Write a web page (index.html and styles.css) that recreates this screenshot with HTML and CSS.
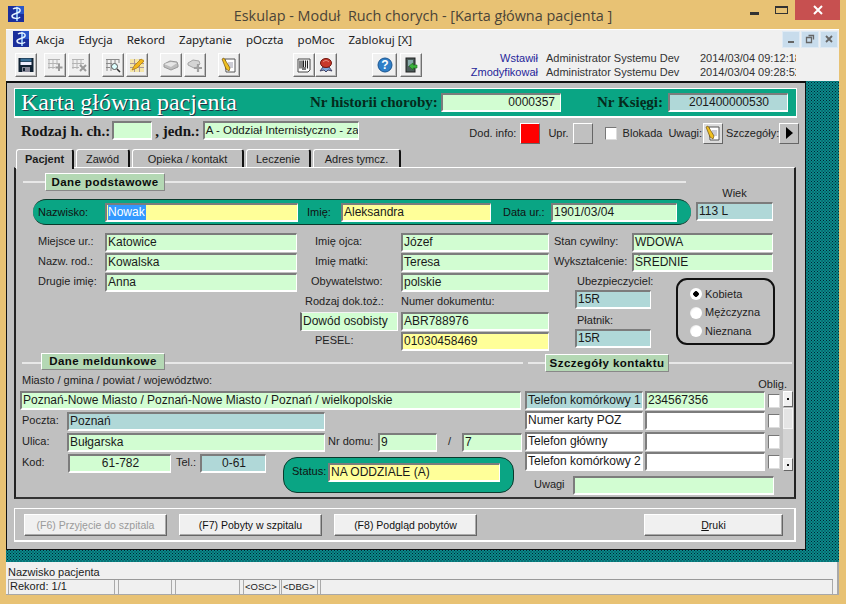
FILE: index.html
```html
<!DOCTYPE html>
<html lang="pl">
<head>
<meta charset="utf-8">
<title>Eskulap - Moduł Ruch chorych</title>
<link rel="stylesheet" href="styles.css">
</head>
<body>
<div class="window">
  <header class="titlebar">
    <div class="tb-left">
      <svg class="logo" viewBox="0 0 16 16"><rect width="16" height="16" fill="#1b2f9c"/><rect x="8" width="8" height="8" fill="#2a56c8"/><path d="M9 1v14" stroke="#9fd6ff" stroke-width="1.6"/><path d="M5 3c3-2 8-1 7 2s-8 2-8 5 7 3 8 1" fill="none" stroke="#e8f4ff" stroke-width="1.5"/></svg>
    </div>
    <div class="tb-title">Eskulap - Moduł&nbsp; Ruch chorych - [Karta główna pacjenta ]</div>
    <div class="tb-controls">
      <span class="wc wc-min"></span>
      <span class="wc wc-max"></span>
      <span class="wc-close"><svg viewBox="0 0 10 10" class="wc-x"><path d="M1 1l8 8M9 1l-8 8" stroke="#fff" stroke-width="2"/></svg></span>
    </div>
  </header>
  <div class="client">
    <nav class="menubar">
      <svg class="logo menu-logo" viewBox="0 0 16 16"><rect width="16" height="16" fill="#1b2f9c"/><rect x="8" width="8" height="8" fill="#2a56c8"/><path d="M9 1v14" stroke="#9fd6ff" stroke-width="1.6"/><path d="M5 3c3-2 8-1 7 2s-8 2-8 5 7 3 8 1" fill="none" stroke="#e8f4ff" stroke-width="1.5"/></svg>
      <span class="menu-item">Akcja</span>
      <span class="menu-item">Edycja</span>
      <span class="menu-item">Rekord</span>
      <span class="menu-item">Zapytanie</span>
      <span class="menu-item">pOczta</span>
      <span class="menu-item">poMoc</span>
      <span class="menu-item">Zablokuj [X]</span>
      <div class="mdi-btns">
        <span class="mdi-btn"><svg viewBox="0 0 10 10"><rect x="2" y="7" width="6" height="2" fill="#666"/></svg></span>
        <span class="mdi-btn"><svg viewBox="0 0 10 10"><path d="M3.5 1.5h5v4M1.5 3.5h5v5h-5z" fill="none" stroke="#666" stroke-width="1.3"/></svg></span>
        <span class="mdi-btn"><svg viewBox="0 0 10 10"><path d="M2 2l6 6M8 2l-6 6" stroke="#666" stroke-width="1.8"/></svg></span>
      </div>
    </nav>
    <div class="toolbar">
      <span class="tbtn"><svg viewBox="0 0 16 16"><rect x="0.500" y="1" width="15" height="14" fill="#123"/><rect x="2.500" y="1.500" width="11" height="3" fill="#3a6f96"/><rect x="2.500" y="5" width="11" height="3" fill="#eef"/><rect x="4" y="10" width="8" height="5" fill="#889"/><rect x="5" y="11" width="2" height="3" fill="#123"/></svg></span>
      <span class="tbtn ml7"><svg viewBox="0 0 16 16"><path d="M1 2.500h12M1 6.500h12M1 10.500h7M2 2v10M6 2v10M10 2v6" stroke="#b4b4b4" fill="none"/><path d="M12 7v7M8.500 10.500h7" stroke="#9a9a9a" stroke-width="2"/></svg></span>
      <span class="tbtn ml2"><svg viewBox="0 0 16 16"><path d="M1 2.500h12M1 6.500h12M1 10.500h7M2 2v10M6 2v10M10 2v6" stroke="#b4b4b4" fill="none"/><path d="M9 8l6 6M15 8l-6 6" stroke="#9a9a9a" stroke-width="2"/></svg></span>
      <span class="tbtn ml12"><svg viewBox="0 0 16 16"><path d="M1 2.500h13M1 6.500h6M1 10.500h4M2 2v12M6 2v12M10 2v4M14 2v4" stroke="#8a8a8a" fill="none"/><circle cx="9.500" cy="9.500" r="3" fill="#dff" stroke="#555"/><path d="M12 12l3 3" stroke="#333" stroke-width="1.6"/></svg></span>
      <span class="tbtn ml2"><svg viewBox="0 0 16 16"><rect x="1" y="2" width="14" height="13" fill="#f5e6a8"/><path d="M1 6.500h14M1 10.500h14M5.500 2v13M10.500 2v13" stroke="#a99" fill="none"/><path d="M3 13l2-4 7-7 3 2-7 7z" fill="#f2b71c" stroke="#a8740c" stroke-width=".7"/></svg></span>
      <span class="tbtn ml12"><svg viewBox="0 0 16 16"><path d="M1 7l6-3 7 1 1 3v2l-7 3-7-3z" fill="#bdbdbd" stroke="#9a9a9a"/><path d="M1 7l7 3 6-4-6-1z" fill="#e6e6e6"/></svg></span>
      <span class="tbtn ml2"><svg viewBox="0 0 16 16"><path d="M1 6l5-3 6 1 1 3-3 3-3 1-6-3z" fill="#d4d4d4" stroke="#a4a4a4"/><path d="M11 7v8M7 11h8" stroke="#a0a0a0" stroke-width="2.200"/></svg></span>
      <span class="tbtn ml12"><svg viewBox="0 0 16 16"><path d="M4 2h10v13H5z" fill="#fff" stroke="#555"/><path d="M7 6h5M7 8h5M8 10h4" stroke="#99a"/><path d="M1 2l2-1 6 10-1 3-3-2z" fill="#f0c020" stroke="#705010" stroke-width=".7"/></svg></span>
      <span class="tbtn ml53"><svg viewBox="0 0 16 16"><path d="M2 2h12v11l-2 2H2z" fill="#fff" stroke="#444"/><path d="M4 3.500v8M6 3.500v8M7.500 3.500v8M9.500 3.500v8M11.500 3.500v8" stroke="#222" stroke-width="1.100"/><rect x="6" y="10" width="4" height="3" fill="#777"/></svg></span>
      <span class="tbtn"><svg viewBox="0 0 16 16"><path d="M5 10l-3 4 4-1 2 2 2-2 4 1-3-4z" fill="#7fa6d8" stroke="#446"/><ellipse cx="8" cy="6" rx="5.500" ry="4.500" fill="#c8392c" stroke="#701810"/><path d="M5 5c2-2 4-2 6 0" stroke="#e89488" fill="none"/></svg></span>
      <span class="tbtn tbtn-wide ml35"><svg viewBox="0 0 16 16"><circle cx="8" cy="8" r="7" fill="#2f7fc8" stroke="#1a5590"/><text x="8" y="12" class="help-q">?</text></svg></span>
      <span class="tbtn ml3"><svg viewBox="0 0 16 16"><rect x="3" y="1" width="9" height="14" fill="#4a5a58" stroke="#222"/><rect x="5" y="3" width="5" height="6" fill="#8aa"/><path d="M6 9l4-3v2h4v3h-4v2z" fill="#3db23d" stroke="#1a701a" stroke-width=".6"/></svg></span>
      <div class="meta">
        <span class="meta-l">Wstawił</span><span>Administrator Systemu Dev</span><span class="meta-d">2014/03/04 09:12:18</span>
        <span class="meta-l">Zmodyfikował</span><span>Administrator Systemu Dev</span><span class="meta-d">2014/03/04 09:28:52</span>
      </div>
    </div>
    <div class="mdi">
      <main class="form">
        <div class="head">
          <h1 class="head-title">Karta główna pacjenta</h1>
          <span class="head-l hl-hist">Nr historii choroby:</span>
          <span class="f f-h green ta-r w120">0000357</span>
          <span class="head-l hl-ks">Nr Księgi:</span>
          <span class="f f-h teal ta-c w120">201400000530</span>
        </div>
        <div class="row2">
          <span class="bold-l">Rodzaj h. ch.:</span>
          <span class="f green w40 ml2"></span>
          <span class="bold-l ml3">, jedn.:</span>
          <span class="f green w156 ml3 f-sm">A - Oddział Internistyczno - za</span>
          <div class="row2-right">
            <span class="lb">Dod. info:</span>
            <span class="sq sq-red"></span>
            <span class="lb ml8">Upr.</span>
            <span class="sq"></span>
            <span class="cb ml12"></span>
            <span class="lb ml6">Blokada</span>
            <span class="lb ml6">Uwagi:</span>
            <span class="sq sq-icon"><svg viewBox="0 0 16 16"><path d="M4 2h10v13H5z" fill="#fff" stroke="#555"/><path d="M7 6h5M7 8h5M8 10h4" stroke="#99a"/><path d="M1 2l2-1 6 10-1 3-3-2z" fill="#f0c020" stroke="#705010" stroke-width=".7"/></svg></span>
            <span class="lb ml3 w51">Szczegóły:</span>
            <span class="sq sq-arrow"><svg viewBox="0 0 10 14"><path d="M2 1l7 6-7 6z" fill="#000"/></svg></span>
          </div>
        </div>
        <div class="tabs">
          <span class="tab tab-on w58">Pacjent</span>
          <span class="tab w54">Zawód</span>
          <span class="tab w112">Opieka / kontakt</span>
          <span class="tab w65">Leczenie</span>
          <span class="tab w88">Adres tymcz.</span>
        </div>
        <section class="panel">
          <div class="top-block">
            <div class="top-main">
              <div class="legend leg1">
                <span class="line w22"></span>
                <span class="leg-label w120">Dane podstawowe</span>
                <span class="line line-fill"></span>
              </div>
              <div class="pill">
                <span class="lb w67">Nazwisko:</span>
                <span class="f yellow w193"><span class="sel">Nowak</span></span>
                <span class="lb w34 ml9">Imię:</span>
                <span class="f yellow w150">Aleksandra</span>
                <span class="lb w48 ml12">Data ur.:</span>
                <span class="f green w126">1901/03/04</span>
              </div>
            </div>
            <div class="wiek">
              <span class="lb lb-c">Wiek</span>
              <span class="f teal w77">113 L</span>
            </div>
          </div>
          <div class="cols">
            <div class="col col-a">
              <div class="r"><span class="lb w67">Miejsce ur.:</span><span class="f green w192">Katowice</span></div>
              <div class="r"><span class="lb w67">Nazw. rod.:</span><span class="f green w192">Kowalska</span></div>
              <div class="r"><span class="lb w67">Drugie imię:</span><span class="f green w192">Anna</span></div>
            </div>
            <div class="col col-b">
              <div class="r"><span class="lb w101 pl15">Imię ojca:</span><span class="f green w148">Józef</span></div>
              <div class="r"><span class="lb w101 pl15">Imię matki:</span><span class="f green w148">Teresa</span></div>
              <div class="r"><span class="lb w101 pl11">Obywatelstwo:</span><span class="f green w148">polskie</span></div>
              <div class="r r-lab"><span class="lb w101 pl5">Rodzaj dok.toż.:</span><span class="lb">Numer dokumentu:</span></div>
              <div class="r"><span class="f f-plain green w98">Dowód osobisty</span><span class="f green w148 ml3">ABR788976</span></div>
              <div class="r"><span class="lb w101 pl15">PESEL:</span><span class="f yellow w148">01030458469</span></div>
            </div>
            <div class="col col-c">
              <div class="r"><span class="lb w78">Stan cywilny:</span><span class="f green w141">WDOWA</span></div>
              <div class="r"><span class="lb w78">Wykształcenie:</span><span class="f green w141">ŚREDNIE</span></div>
              <div class="ins-row">
                <div class="ins">
                  <span class="lb ins-l">Ubezpieczyciel:</span>
                  <span class="f teal w76">15R</span>
                  <span class="lb ins-l ins-l2">Płatnik:</span>
                  <span class="f teal w76">15R</span>
                </div>
                <div class="radios">
                  <div class="rad"><span class="radio radio-on"></span><span class="lb">Kobieta</span></div>
                  <div class="rad"><span class="radio"></span><span class="lb">Mężczyzna</span></div>
                  <div class="rad"><span class="radio"></span><span class="lb">Nieznana</span></div>
                </div>
              </div>
            </div>
          </div>
          <div class="legends2">
            <div class="legend leg2">
              <span class="line w19"></span>
              <span class="leg-label w124 top">Dane meldunkowe</span>
              <span class="line line-fill"></span>
            </div>
            <div class="legend leg3">
              <span class="line w17"></span>
              <span class="leg-label w124 bottom">Szczegóły kontaktu</span>
              <span class="line line-fill"></span>
            </div>
          </div>
          <div class="lower">
            <div class="addr">
              <span class="lb addr-top">Miasto / gmina / powiat / województwo:</span>
              <span class="f green w501">Poznań-Nowe Miasto / Poznań-Nowe Miasto / Poznań / wielkopolskie</span>
              <div class="r"><span class="lb w47 pl2">Poczta:</span><span class="f teal w258">Poznań</span></div>
              <div class="r">
                <span class="lb w47 pl2">Ulica:</span><span class="f green w258">Bułgarska</span>
                <span class="lb w50 ml3">Nr domu:</span><span class="f green w59">9</span>
                <span class="lb w25 ta-c">/</span><span class="f green w60">7</span>
              </div>
              <div class="r r-kod">
                <span class="lb w48 pl2">Kod:</span><span class="f green ta-c w103">61-782</span>
                <span class="lb w24 ml5">Tel.:</span><span class="f teal ta-c w66">0-61</span>
                <div class="status">
                  <span class="lb w36">Status:</span><span class="f yellow w172">NA ODDZIALE (A)</span>
                </div>
              </div>
            </div>
            <div class="contact">
              <div class="oblig"><span class="lb">Oblig.</span></div>
              <div class="contact-body">
                <div class="contact-grid">
                  <span class="f teal">Telefon komórkowy 1</span><span class="f green">234567356</span><span class="cb"></span>
                  <span class="f white">Numer karty POZ</span><span class="f white"></span><span class="cb"></span>
                  <span class="f white">Telefon główny</span><span class="f white"></span><span class="cb"></span>
                  <span class="f white">Telefon komórkowy 2</span><span class="f white"></span><span class="cb"></span>
                </div>
                <div class="scroll">
                  <span class="sb-btn sb-up"></span>
                  <span class="sb-thumb"></span>
                  <span class="sb-track"></span>
                  <span class="sb-btn sb-down"></span>
                </div>
              </div>
              <div class="r r-uw"><span class="lb w39">Uwagi</span><span class="f green w201"></span></div>
            </div>
          </div>
        </section>
        <div class="actions">
          <button class="btn btn-off w143">(F6) Przyjęcie do szpitala</button>
          <button class="btn w143">(F7) Pobyty w szpitalu</button>
          <button class="btn w143">(F8) Podgląd pobytów</button>
          <button class="btn btn-druki w139"><u>D</u>ruki</button>
        </div>
      </main>
    </div>
    <footer class="status-area">
      <div class="hint">Nazwisko pacjenta</div>
      <div class="sbar">
        <span class="cell w107">Rekord: 1/1</span>
        <span class="cell w54 ml3"></span>
        <span class="cell w65 ml3"></span>
        <span class="cell cell-sm w37 ml3">&lt;OSC&gt;</span>
        <span class="cell cell-sm w37 ml1">&lt;DBG&gt;</span>
        <span class="cell cell-fill ml2"></span>
      </div>
    </footer>
  </div>
</div>
</body>
</html>
```
FILE: styles.css
```css
* { box-sizing: border-box; }
html, body { margin: 0; padding: 0; }
body { background: #e8c274; font-family: "Liberation Sans", Arial, sans-serif; font-size: 11px; color: #1c1c1c; }
.window { width: 846px; height: 604px; display: flex; flex-direction: column; overflow: hidden; }

.titlebar { height: 29px; display: grid; grid-template-columns: 1fr auto 1fr; flex: none; }
.tb-left { padding: 6px 0 0 8px; }
.logo { width: 16px; height: 16px; display: block; }
.tb-title { font: 14.4px/29px "Open Sans", "Noto Sans", sans-serif; color: #4a4438; white-space: nowrap; padding-top: 1px; }
.tb-controls { display: flex; justify-content: flex-end; padding-right: 6px; }
.wc { display: block; width: 12px; }
.wc-min { height: 3px; width: 9px; background: #333; margin: 12px 16px 0 0; }
.wc-max { height: 8px; width: 13px; border: 2px solid #333; border-width: 2px 1px 1px; margin: 6px 7px 0 0; }
.wc-close { width: 45px; height: 20px; background: #c75050; display: flex; align-items: center; justify-content: center; }
.wc-x { width: 10px; height: 10px; }

.client { margin: 0 7px 9px 6px; flex: 1; min-height: 0; display: flex; flex-direction: column; }
.menubar { height: 19px; flex: none; background: #f0f0f0; display: flex; align-items: center; border-top: 1px solid #fff; padding-left: 7px; }
.menu-logo { margin-right: 7px; }
.menu-item { font: 11.5px "Noto Sans", sans-serif; color: #222; margin-right: 14px; }
.mdi-btns { margin-left: auto; display: flex; gap: 1px; padding-right: 1px; }
.mdi-btn { width: 18px; height: 17px; background: #c8dcec; border: 1px solid #dfeaf4; display: flex; align-items: center; justify-content: center; }
.mdi-btn svg { width: 10px; height: 10px; }

.toolbar { height: 33px; flex: none; background: #f0f0f0; display: flex; padding: 5px 0 0 9px; }
.tbtn { width: 22px; height: 24px; flex: none; display: flex; align-items: center; justify-content: center; background: #f0f0f0; border: 1px solid; border-color: #fff #707070 #707070 #fff; box-shadow: inset -1px -1px 0 #bbb; }
.tbtn svg { width: 16px; height: 16px; }
.tbtn-wide { width: 25px; }
.help-q { font: bold 12px "Liberation Sans", sans-serif; fill: #fff; text-anchor: middle; }
.meta { margin: -2px 43px 0 auto; display: grid; grid-template-columns: 78px 154px 96px; grid-auto-rows: 14px; line-height: 14px; font-size: 11px; color: #333; white-space: nowrap; }
.meta-l { color: #26269a; text-align: right; margin-right: 8px; grid-column: 1; }
.meta-d { overflow: hidden; }

.mdi { flex: 1; min-height: 0; display: flex; align-items: flex-start; background: radial-gradient(#023 .7px, transparent 1px) 0 0 / 3px 3px, radial-gradient(#023 .7px, transparent 1px) 1.5px 1.5px / 3px 3px, #0b8b8b; }
.form { width: 800px; height: 469px; background: #c0c0c0; border: 1px solid #111; border-top-width: 2px; padding: 5px 0 0 7px; }

.head { width: 783px; height: 30px; background: #0aa584; border: 1px solid #fff; border-width: 1px 1px 2px 1px; display: flex; align-items: center; }
.head-title { margin: 0 0 0 6px; font: normal 24px "Liberation Serif", serif; color: #fff; text-shadow: 1px 1px 0 #234; width: 289px; white-space: nowrap; }
.head-l { font: bold 15px "Liberation Serif", serif; color: #052b1c; white-space: nowrap; }
.hl-hist { width: 131px; }
.hl-ks { margin-left: 36px; width: 71px; }

.row2 { height: 30px; display: flex; align-items: flex-start; padding-top: 3px; }
.bold-l { font: bold 15px/20px "Liberation Serif", serif; color: #151515; white-space: nowrap; }
.row2 > .bold-l:first-child { margin-left: 7px; }
.row2-right { margin-left: auto; display: flex; align-items: center; margin-right: 6px; height: 22px; margin-top: 1px; }
.row2-right .lb { line-height: 16px; }
.sq { width: 20px; height: 21px; background: #c0c0c0; border: 1px solid; border-color: #fff #666 #666 #fff; margin-left: 4px; display: flex; align-items: center; justify-content: center; flex: none; }
.sq svg { width: 16px; height: 16px; }
.sq-red { background: #f00; }
.sq-icon { background: #dcdcdc; margin-left: 1px; }
.sq-arrow { margin-left: 2px; }
.sq-arrow svg { width: 10px; height: 14px; }

.tabs { display: flex; gap: 2px; height: 20px; position: relative; z-index: 1; margin-left: 2px; margin-bottom: -1px; padding-top: 1px; }
.tab { height: 18px; text-align: center; line-height: 18px; border: 1px solid #fff; border-width: 1px 0 0 1px; border-right: 2px solid #111; border-radius: 3px 3px 0 0; font-size: 11px; }
.tab-on { font-weight: bold; height: 20px; background: #c0c0c0; }

.panel { width: 782px; height: 332px; border: 1px solid #fff; border-left: 2px solid #222; border-right: 2px solid #222; border-bottom: 2px solid #333; }
.top-block { display: flex; padding-top: 5px; }
.top-main { width: 680px; flex: none; }
.legend { display: flex; align-items: center; }
.leg1 { height: 18px; padding-left: 7px; margin-right: 10px; }
.line { height: 2px; background: #e8e8e8; display: block; flex: none; }
.line-fill { flex: 1; }
.leg-label { background: #b4d8b4; border: 1px solid; border-color: #fff #888 #888 #fff; font-weight: bold; font-size: 11.5px; letter-spacing: .45px; text-align: center; line-height: 16px; height: 18px; color: #0c0c0c; flex: none; }
.pill { margin: 8px 0 0 17px; width: 658px; height: 26px; background: #0aa584; border: 2px solid #0a3a2c; border-width: 1px 0; border-radius: 13px; display: flex; align-items: center; padding-left: 5px; }
.pill .lb { color: #111; }
.wiek { padding-top: 12px; display: flex; flex-direction: column; }
.lb-c { text-align: center; height: 17px; line-height: 14px; }

.cols { display: flex; margin-top: 8px; height: 118px; }
.col { display: flex; flex-direction: column; gap: 1px; flex: none; }
.col-a { width: 284px; padding-left: 22px; }
.col-b { width: 254px; }
.r { display: flex; height: 19px; flex: none; }
.r-lab { height: 18px; }
.ins-row { display: flex; }
.ins { width: 76px; margin-left: 21px; display: flex; flex-direction: column; }
.ins-l { height: 17px; line-height: 15px; padding-left: 2px; }
.ins-l2 { margin-top: 3px; }
.radios { width: 99px; height: 67px; margin: 5px 0 0 25px; border: 2px solid #111; border-radius: 11px; padding: 5px 0 0 12px; display: flex; flex-direction: column; }
.rad { display: flex; align-items: center; height: 18.5px; gap: 3px; }
.radio { width: 12px; height: 12px; border-radius: 50%; background: radial-gradient(circle at 60% 60%, #fff 55%, #c8c8c8); display: block; flex: none; }
.radio-on { background: radial-gradient(circle, #000 0 2.5px, #fff 3px 6px); }

.legends2 { display: flex; height: 19px; margin-top: 2px; }
.leg2 { width: 501px; margin-left: 6px; flex: none; }
.leg3 { width: 264px; margin-left: 5px; flex: none; }
.top { align-self: flex-start; height: 17px; line-height: 15px; }
.bottom { align-self: flex-end; }

.lower { display: flex; }
.addr { width: 502px; margin-left: 4px; display: flex; flex-direction: column; gap: 2px; flex: none; }
.addr-top { height: 17px; line-height: 17px; padding-left: 2px; }
.r-kod { height: auto; align-items: flex-start; }
.status { width: 231px; height: 36px; margin: 3px 0 0 17px; background: #0aa584; border: 1px solid #0a3a2c; border-radius: 14px; display: flex; padding: 5px 0 0 8px; flex: none; }
.status .lb { color: #111; }

.contact { margin-left: 3px; width: 268px; }
.oblig { height: 19px; text-align: right; padding-right: 6px; }
.oblig .lb { line-height: 25px; }
.contact-body { display: flex; }
.contact-grid { display: grid; grid-template-columns: 118px 120px 14px; column-gap: 2px; grid-auto-rows: 19px; row-gap: 1.3px; width: 256px; }
.contact-grid .cb { margin: 3px 0 0 1px; }
.scroll { width: 10px; height: 80px; margin-left: 2px; display: flex; flex-direction: column; }
.sb-btn { height: 16px; background: #f0f0f0; border: 1px solid; border-color: #fff #666 #666 #fff; display: flex; align-items: center; justify-content: center; flex: none; }
.sb-btn::after { content: ""; width: 2px; height: 2px; background: #111; }
.sb-down { height: 13px; }
.sb-thumb { height: 21px; background: #e4e4e4; border: 1px solid #f4f4f4; margin-top: 1px; flex: none; }
.sb-track { flex: 1; background: #d4d4d4; }
.r-uw { margin-top: 5px; height: 18px; padding-left: 9px; }

.actions { width: 782px; height: 34px; margin-top: 9px; border: 2px solid; border-color: #fff; border-width: 1px 2px 2px 1px; display: flex; padding: 5px 0 0 9px; gap: 12px; }
.btn { height: 22px; background: #f0f0f0; border: 1px solid; border-color: #fff #666 #666 #fff; box-shadow: inset -1px -1px 0 #aaa; font: 10.5px "Liberation Sans", sans-serif; color: #111; padding: 0; }
.btn-off { color: #9a9a9a; }
.btn-druki { margin-left: 155px; }

.status-area { height: 33px; flex: none; background: #f0f0f0; padding: 3px 6px 0 2px; box-shadow: inset -2px -1px 0 #a8a8a8; }
.hint { height: 14px; font-size: 11px; line-height: 14px; }
.sbar { display: flex; height: 14px; border-top: 1px solid #999; }
.cell { height: 14px; font-size: 11px; line-height: 13px; border-right: 1px solid #aaa; border-left: 1px solid #aaa; flex: none; background: #f0f0f0; padding-left: 1px; white-space: nowrap; overflow: hidden; }
.cell-sm { font-size: 9.5px; }
.cell-fill { flex: 1; }

.f { display: block; flex: none; height: 19px; border: 1px solid; border-width: 2px 1px 2px 2px; border-color: #7c7c7c #fff #fff #7c7c7c; font-size: 12px; line-height: 15px; padding-left: 1px; white-space: nowrap; overflow: hidden; color: #1a1a1a; }
.f-sm { font-size: 11.5px; }
.f-plain { border-color: #f2f2f2 #fff #fff #666; border-width: 1px 1px 1px 2px; line-height: 17px; }
.green { background: #d2fdd2; }
.teal { background: #b0d8d8; }
.yellow { background: #ffff99; }
.white { background: #fff; }
.sel { background: #3399ff; color: #fff; display: inline-block; height: 15px; padding: 0 1px 0 0; }
.ta-r { text-align: right; padding-right: 5px; }
.ta-c { text-align: center; }
.lb { display: block; flex: none; line-height: 17px; white-space: nowrap; color: #222; }
.cb { display: block; width: 12px; height: 14px; background: #fff; border: 1px solid; border-color: #777 #ddd #ddd #777; flex: none; }
.row2-right .cb { height: 13px; }

.ml1 { margin-left: 1px; } .ml2 { margin-left: 2px; } .ml3 { margin-left: 3px; } .ml5 { margin-left: 5px; } .ml6 { margin-left: 6px; } .ml7 { margin-left: 7px; } .ml8 { margin-left: 8px; } .ml9 { margin-left: 9px; } .ml12 { margin-left: 12px; } .ml35 { margin-left: 35px; } .ml53 { margin-left: 53px; }
.pl2 { padding-left: 2px; } .pl5 { padding-left: 5px; } .pl11 { padding-left: 11px; } .pl15 { padding-left: 15px; }
.w17 { width: 17px; } .w19 { width: 19px; } .w22 { width: 22px; } .w24 { width: 24px; } .w25 { width: 25px; } .w34 { width: 34px; } .w36 { width: 36px; } .w37 { width: 37px; } .w39 { width: 39px; } .w40 { width: 40px; } .w47 { width: 47px; } .w48 { width: 48px; } .w50 { width: 50px; } .w51 { width: 51px; } .w54 { width: 54px; } .w58 { width: 58px; } .w59 { width: 59px; } .w60 { width: 60px; } .w65 { width: 65px; } .w66 { width: 66px; } .w67 { width: 67px; } .w76 { width: 76px; } .w77 { width: 77px; } .w78 { width: 78px; } .w88 { width: 88px; } .w98 { width: 98px; } .w101 { width: 101px; } .w103 { width: 103px; } .w107 { width: 107px; } .w112 { width: 112px; } .w120 { width: 120px; } .w124 { width: 124px; } .w126 { width: 126px; } .w139 { width: 139px; } .w141 { width: 141px; } .w143 { width: 143px; } .w148 { width: 148px; } .w150 { width: 150px; } .w156 { width: 156px; } .w172 { width: 172px; } .w192 { width: 192px; } .w193 { width: 193px; } .w201 { width: 201px; } .w258 { width: 258px; } .w501 { width: 501px; }
```
